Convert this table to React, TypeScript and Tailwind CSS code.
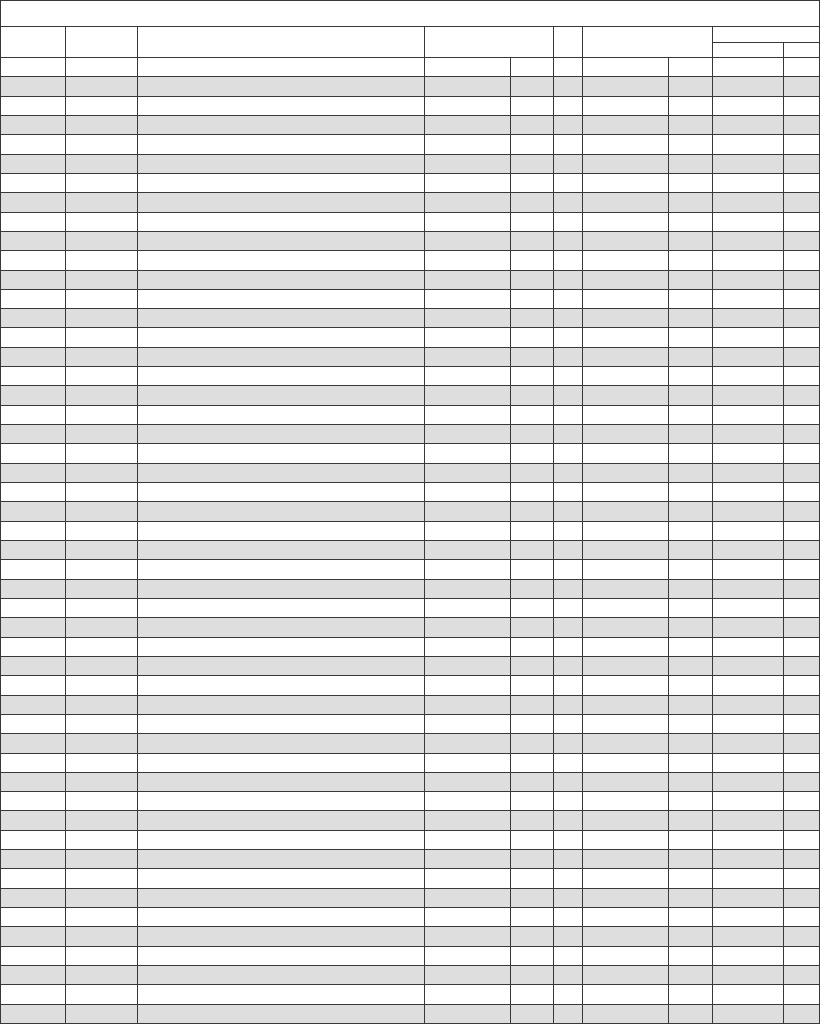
import React from "react";

const ROWS = Array.from({ length: 50 }, (_, i) => i);
const COLS = Array.from({ length: 10 }, (_, i) => i);

export default function App() {
  return (
    <div className="w-[820px] h-[1024px] bg-white" style={{ fontFamily: '"Liberation Sans", Arial, sans-serif' }}>
      <div className="w-full h-full bg-[#383838] p-px">
        <div className="grid h-full gap-px grid-cols-[64px_71px_286px_85px_42px_28px_85px_43px_70px_35px] grid-rows-[25px_15px_14px_repeat(50,minmax(0,1fr))]">
          <div className="col-span-10 bg-white" />
          <div className="row-span-2 bg-white" />
          <div className="row-span-2 bg-white" />
          <div className="row-span-2 bg-white" />
          <div className="row-span-2 col-span-2 bg-white" />
          <div className="row-span-2 bg-white" />
          <div className="row-span-2 col-span-2 bg-white" />
          <div className="col-span-2 bg-white" />
          <div className="bg-white" />
          <div className="bg-white" />
          {ROWS.map((r) =>
            COLS.map((c) => (
              <div key={`${r}-${c}`} className={r % 2 === 0 ? "bg-white" : "bg-[#dedede]"} />
            ))
          )}
        </div>
      </div>
    </div>
  );
}
